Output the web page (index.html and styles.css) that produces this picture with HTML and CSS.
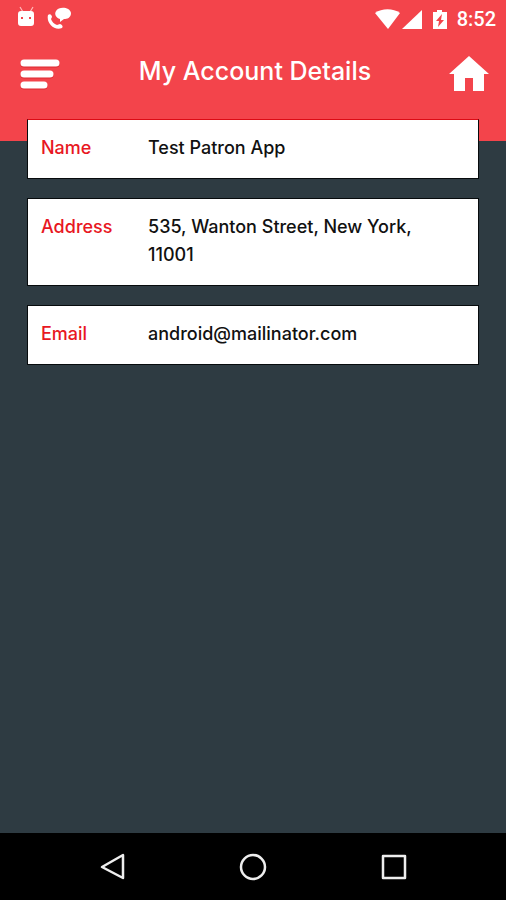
FILE: index.html
```html
<!DOCTYPE html>
<html lang="en">
<head>
<meta charset="utf-8">
<meta name="viewport" content="width=device-width, initial-scale=1">
<title>My Account Details</title>
<link rel="stylesheet" href="styles.css">
</head>
<body>
<div class="app">
  <header class="header">
    <div class="status">
      <svg width="56" height="24" viewBox="0 0 56 24" fill="#fff" aria-hidden="true">
        <path d="M4 2l3 5M17 2l-3 5" stroke="#fbb" stroke-width="1.2"/>
        <path fill-rule="evenodd" d="M5 6h10q3 0 3 3v9q0 3-3 3H5q-3 0-3-3V9q0-3 3-3zM5 12v2h2v-2zm8 0v2h2v-2z"/>
        <path d="M40 6c3-5 14-4 15 2 0 5-4 6-7 6l-4 3v-3c-4-1-6-5-4-8z"/>
        <path d="M32 10c2-2 4 0 4 2l-1 2c1 3 3 5 6 6l3-1c3 1 3 3 2 4-8 3-16-5-14-13z"/>
      </svg>
      <div class="status-right">
        <svg width="74" height="22" viewBox="0 0 74 22" fill="#fff" aria-hidden="true">
          <path d="M0 6c7-5 18-5 25 0L13 22z"/>
          <path d="M27 22L47 3v19z"/>
          <path fill-rule="evenodd" d="M58 5h4V3h5v2h5v17H58zM67 7l-6 7h3l-1 6 6-7h-3z"/>
        </svg>
        <span class="time">8:52</span>
      </div>
    </div>
    <div class="toolbar">
      <button class="icon-button" type="button" aria-label="Menu">
        <svg width="42" height="36" viewBox="0 0 42 36" fill="none" stroke="#cf1820" stroke-linecap="round" aria-hidden="true">
          <path d="M5 8h32M5 19h26M5 30h20" stroke-width="7" opacity=".6"/>
          <path d="M5 7h32M5 18h26M5 29h20" stroke="#fff" stroke-width="7"/>
        </svg>
      </button>
      <h1 class="title">My Account Details</h1>
      <a class="icon-button" href="#" aria-label="Home">
        <svg width="40" height="36" viewBox="0 0 40 36" fill="#fff" aria-hidden="true">
          <path d="M20 0l20 18h-5v17H24V22h-8v13H5V18H0z"/>
        </svg>
      </a>
    </div>
  </header>
  <main class="content">
    <dl class="details">
      <div class="card"><dt>Name</dt><dd>Test Patron App</dd></div>
      <div class="card"><dt>Address</dt><dd>535, Wanton Street, New York, 11001</dd></div>
      <div class="card"><dt>Email</dt><dd>android@mailinator.com</dd></div>
    </dl>
  </main>
  <nav class="navbar" aria-label="System">
    <button class="icon-button" type="button" aria-label="Back">
      <svg width="28" height="28" viewBox="0 0 28 28" fill="none" stroke="#eee" stroke-width="2.5" stroke-linejoin="round" aria-hidden="true"><path d="M25 2v23L4 14z"/></svg>
    </button>
    <button class="icon-button" type="button" aria-label="Home screen">
      <svg width="28" height="28" viewBox="0 0 28 28" fill="none" stroke="#eee" stroke-width="2.5" aria-hidden="true"><circle cx="14" cy="14" r="12"/></svg>
    </button>
    <button class="icon-button" type="button" aria-label="Recent apps">
      <svg width="28" height="28" viewBox="0 0 28 28" fill="none" stroke="#eee" stroke-width="2.5" stroke-linejoin="round" aria-hidden="true"><path d="M3 3h22v22H3z"/></svg>
    </button>
  </nav>
</div>
</body>
</html>
```
FILE: styles.css
```css
* {
  box-sizing: border-box;
}

body {
  margin: 0;
  background: #2e3b42;
  font-family: Inter, "Liberation Sans", sans-serif;
  font-weight: 500;
}

.app {
  display: flex;
  flex-direction: column;
  min-height: 100vh;
}

.header {
  padding-bottom: 49px;
  background: #f3444b;
  color: #fff;
}

.status {
  display: flex;
  align-items: flex-start;
  justify-content: space-between;
  height: 32px;
  padding: 5px 10px 0 16px;
}

.status-right {
  display: flex;
  align-items: center;
  gap: 8px;
}

.time {
  padding-top: 2px;
  font: 500 20px/24px Roboto, sans-serif;
}

.toolbar {
  display: flex;
  align-items: flex-start;
  justify-content: space-between;
  padding: 24px 17px 0 19px;
}

.icon-button {
  display: flex;
  padding: 0;
  border: 0;
  background: none;
}

.title {
  margin: 0;
  font-size: 25px;
  font-weight: 500;
  line-height: 30px;
}

.content {
  flex: 1;
  padding: 0 27px;
}

.details {
  display: flex;
  flex-direction: column;
  gap: 19px;
  margin: -22px 0 0;
}

.card {
  display: flex;
  padding: 14px 40px 16px 13px;
  border: 1px solid #070b0d;
  background: #fff;
  font-size: 18px;
  line-height: 28px;
}

.card:first-child {
  border-top-color: #dc0b15;
}

dt {
  flex: 0 0 107px;
  color: #e81722;
}

dd {
  margin: 0;
  color: #111;
}

.navbar {
  display: flex;
  align-items: center;
  justify-content: space-between;
  height: 67px;
  padding: 0 98px;
  background: #000;
}
```
